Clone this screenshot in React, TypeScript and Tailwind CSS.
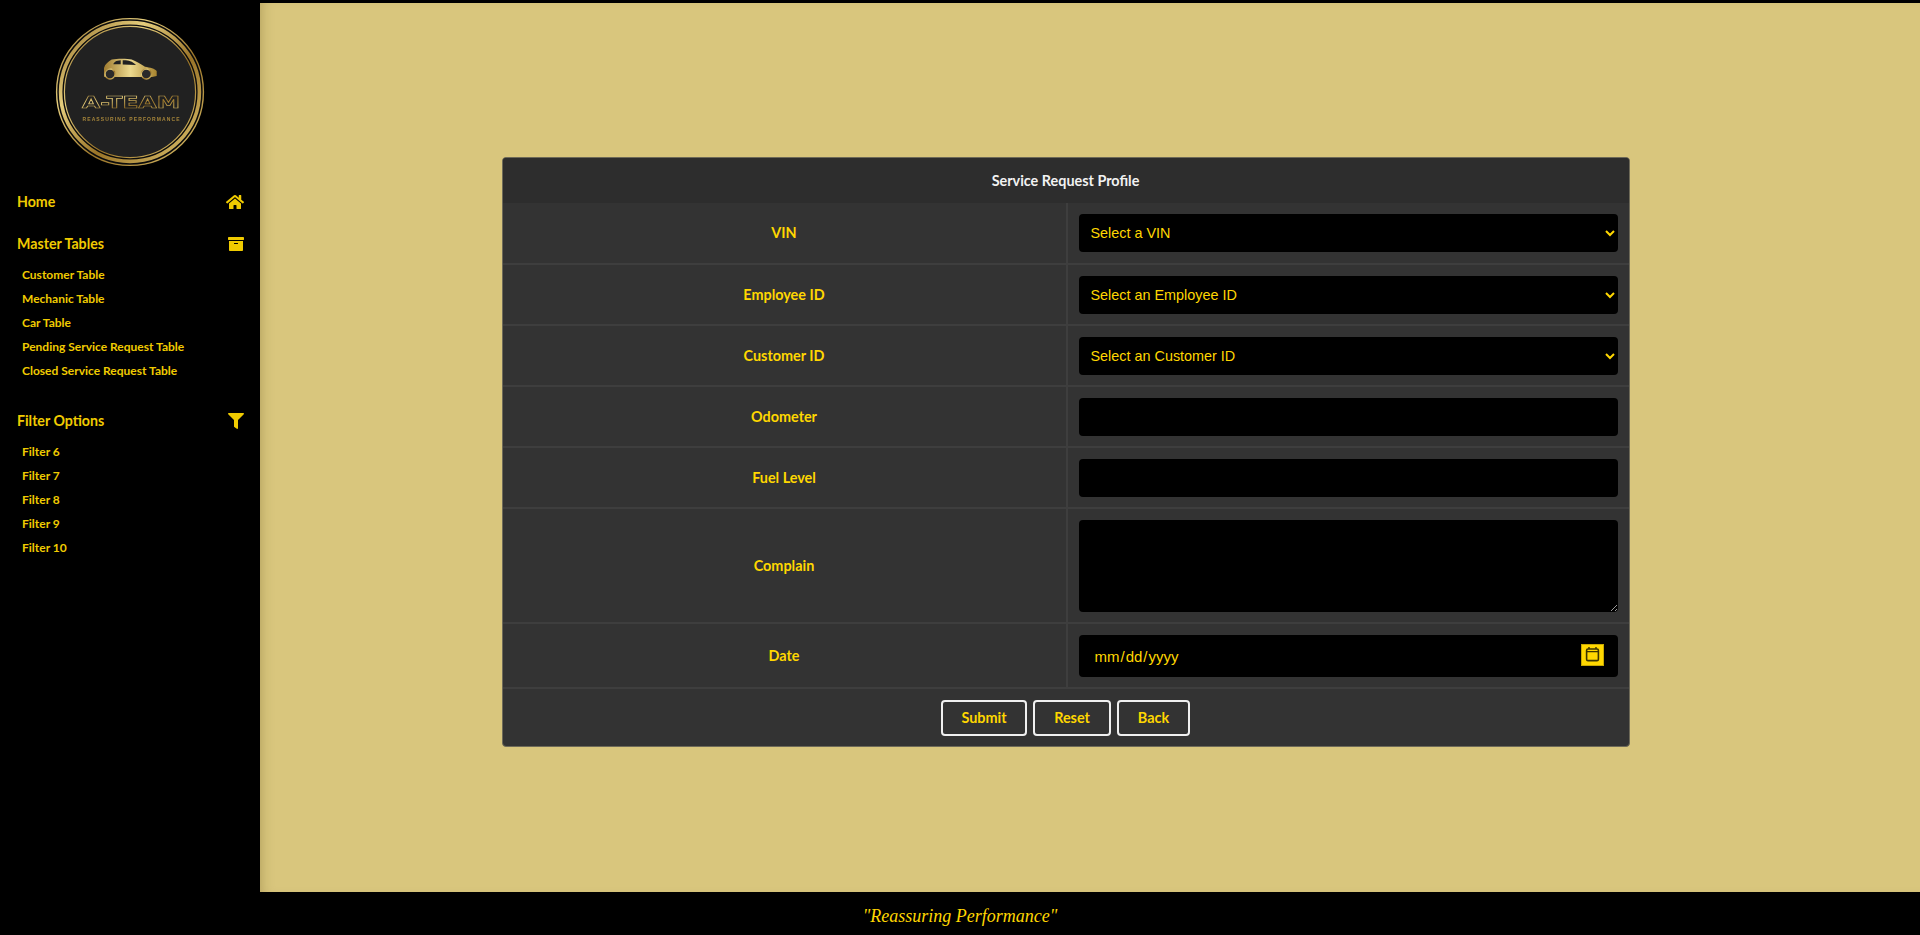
import React from 'react';
import { FaHome, FaArchive, FaFilter } from 'react-icons/fa';

const masterLinks = ['Customer Table', 'Mechanic Table', 'Car Table', 'Pending Service Request Table', 'Closed Service Request Table'];
const filterLinks = ['Filter 6', 'Filter 7', 'Filter 8', 'Filter 9', 'Filter 10'];

const fieldClass = "block w-full h-[38px] rounded-[4px] bg-black text-[#ffd700] text-[14.4px] [font-family:'Liberation_Sans',sans-serif] outline-none";
const buttonClass = 'h-[36px] rounded-[4px] border-2 border-[#f0f0f0] text-[14.4px] font-bold text-[#ffd700]';

const Logo = () => (
  <svg viewBox="0 0 150 150" className="w-[150px] h-[150px] blur-[0.4px]">
    <defs>
      <linearGradient id="gold" x1="0" y1="0" x2="1" y2="1">
        <stop offset="0" stopColor="#8f6b25" />
        <stop offset="0.3" stopColor="#e5cd7c" />
        <stop offset="0.6" stopColor="#9a7428" />
        <stop offset="1" stopColor="#e0c670" />
      </linearGradient>
      <linearGradient id="carGold" x1="0" y1="0" x2="1" y2="0">
        <stop offset="0" stopColor="#a07c30" />
        <stop offset="0.5" stopColor="#ecd98e" />
        <stop offset="1" stopColor="#a8842f" />
      </linearGradient>
    </defs>
    <circle cx="75" cy="75" r="73.4" fill="#0b0b0b" stroke="url(#gold)" strokeWidth="1.4" />
    <circle cx="75" cy="75" r="69.4" fill="none" stroke="url(#gold)" strokeWidth="3.6" />
    <circle cx="75" cy="75" r="65.6" fill="#212121" stroke="url(#gold)" strokeWidth="1.2" />
    <path
      d="M49 58 L49 51 C50 47 53 45 56.7 42.5 C62 41.5 72 41.5 76.7 42.5 C81 44 86 47 90 49.7 C95 50.5 100 51.5 101.7 54 L101.7 59 L97 60 L49 60 Z"
      fill="url(#carGold)"
    />
    <path d="M58.3 47.3 C59 45 61 43.6 65.7 43.2 L65.7 47.3 Z M67.7 43.2 C72 43 77 43.4 81 48 L67.7 47.6 Z" fill="#212121" />
    <circle cx="55" cy="57" r="5" fill="#2a2a2a" stroke="url(#gold)" strokeWidth="1.3" />
    <circle cx="91.3" cy="57" r="5" fill="#2a2a2a" stroke="url(#gold)" strokeWidth="1.3" />
    <text x="76" y="91" textAnchor="middle" fontFamily="'DejaVu Sans', sans-serif" fontSize="16.5" fontWeight="700" fill="none" stroke="url(#gold)" strokeWidth="0.7" textLength="98" lengthAdjust="spacingAndGlyphs">A-TEAM</text>
    <text x="76" y="104" textAnchor="middle" fontFamily="'Liberation Sans', sans-serif" fontSize="5" fontWeight="700" fill="#a5853a" textLength="97" lengthAdjust="spacing">REASSURING PERFORMANCE</text>
  </svg>
);

const NavHeading = ({ label, icon }: { label: string; icon: React.ReactNode }) => (
  <div className="flex items-center justify-between pl-[17px] pr-[16px] h-[24px] text-[14.2px] font-bold">
    <span>{label}</span>
    {icon}
  </div>
);

const NavLinks = ({ items }: { items: string[] }) => (
  <ul className="mt-[7px] pl-[22px] text-[12px] font-bold">
    {items.map((item) => (
      <li key={item} className="h-[24px] leading-[24px]">{item}</li>
    ))}
  </ul>
);

const Row = ({ label, className, children }: { label: string; className: string; children: React.ReactNode }) => (
  <div className={`flex border-b-2 border-[#3e3e3e] ${className}`}>
    <div className="w-[565px] flex items-center justify-center border-r-2 border-[#3e3e3e] text-[14.4px] font-bold text-[#ffd700]">{label}</div>
    <div className="flex-1 flex items-center pl-[11px] pr-[11px]">{children}</div>
  </div>
);

export default function App() {
  return (
    <div className="h-[935px] flex flex-col bg-black font-['Lato',sans-serif] overflow-hidden">
      <div className="flex-1 flex pt-[3px] min-h-0">
        <aside className="w-[260px] shrink-0 text-[#f0cb00]">
          <div className="flex justify-center pt-[14px] pb-[20px]">
            <Logo />
          </div>
          <div className="mt-[3px]">
            <NavHeading label="Home" icon={<FaHome size={18} />} />
            <div className="mt-[18px]">
              <NavHeading label="Master Tables" icon={<FaArchive size={16} />} />
              <NavLinks items={masterLinks} />
            </div>
            <div className="mt-[26px]">
              <NavHeading label="Filter Options" icon={<FaFilter size={16} />} />
              <NavLinks items={filterLinks} />
            </div>
          </div>
        </aside>
        <main className="flex-1 min-w-0 bg-[#d9c67d] shadow-[inset_10px_0_14px_-10px_rgba(90,70,20,0.35)] flex justify-center pt-[154px]">
          <form className="w-[1128px] h-[590px] ml-[-49px] bg-[#333333] border border-[#6e6a58] rounded-[4px] overflow-hidden flex flex-col">
            <div className="h-[45px] flex items-center justify-center bg-[#2d2d2d] text-[14.4px] font-bold text-[#f2f2f2]">Service Request Profile</div>
            <Row label="VIN" className="h-[62px]">
              <select className={`${fieldClass} pl-[8px] pr-[10px]`} defaultValue="">
                <option value="">Select a VIN</option>
              </select>
            </Row>
            <Row label="Employee ID" className="h-[61px]">
              <select className={`${fieldClass} pl-[8px] pr-[10px]`} defaultValue="">
                <option value="">Select an Employee ID</option>
              </select>
            </Row>
            <Row label="Customer ID" className="h-[61px]">
              <select className={`${fieldClass} pl-[8px] pr-[10px]`} defaultValue="">
                <option value="">Select an Customer ID</option>
              </select>
            </Row>
            <Row label="Odometer" className="h-[61px]">
              <input type="text" className={`${fieldClass} px-[10px]`} />
            </Row>
            <Row label="Fuel Level" className="h-[61px]">
              <input type="text" className={`${fieldClass} px-[10px]`} />
            </Row>
            <Row label="Complain" className="h-[115px]">
              <textarea className="block w-full h-[92px] rounded-[4px] bg-black text-[#ffd700] px-[10px] outline-none" />
            </Row>
            <Row label="Date" className="h-[65px]">
              <div className="relative w-full">
                <input
                  type="date"
                  className={`${fieldClass} h-[42px] text-[15px] pl-[15px] pr-[10px] pt-[3px] [&::-webkit-calendar-picker-indicator]:hidden`}
                />
                <svg viewBox="0 0 23 22" className="absolute right-[14px] top-[9px] w-[23px] h-[22px]">
                  <rect x="0.5" y="0.5" width="22" height="21" fill="#ffd700" stroke="#c7a800" />
                  <path d="M8 3v2M15 3v2" stroke="#3a3300" strokeWidth="1.4" />
                  <rect x="5.6" y="5" width="11.8" height="11.6" rx="1.4" fill="none" stroke="#3a3300" strokeWidth="1.6" />
                  <path d="M5.6 7.6h11.8" stroke="#3a3300" strokeWidth="1.4" />
                </svg>
              </div>
            </Row>
            <div className="flex-1 flex items-center justify-center gap-[6px]">
              <button type="button" className={`${buttonClass} w-[86px]`}>Submit</button>
              <button type="button" className={`${buttonClass} w-[78px]`}>Reset</button>
              <button type="button" className={`${buttonClass} w-[73px]`}>Back</button>
            </div>
          </form>
        </main>
      </div>
      <footer className="h-[43px] shrink-0 flex items-center justify-center pt-[6px] font-['Liberation_Serif',serif] italic text-[18px] text-[#ffd700]">"Reassuring Performance"</footer>
    </div>
  );
}
